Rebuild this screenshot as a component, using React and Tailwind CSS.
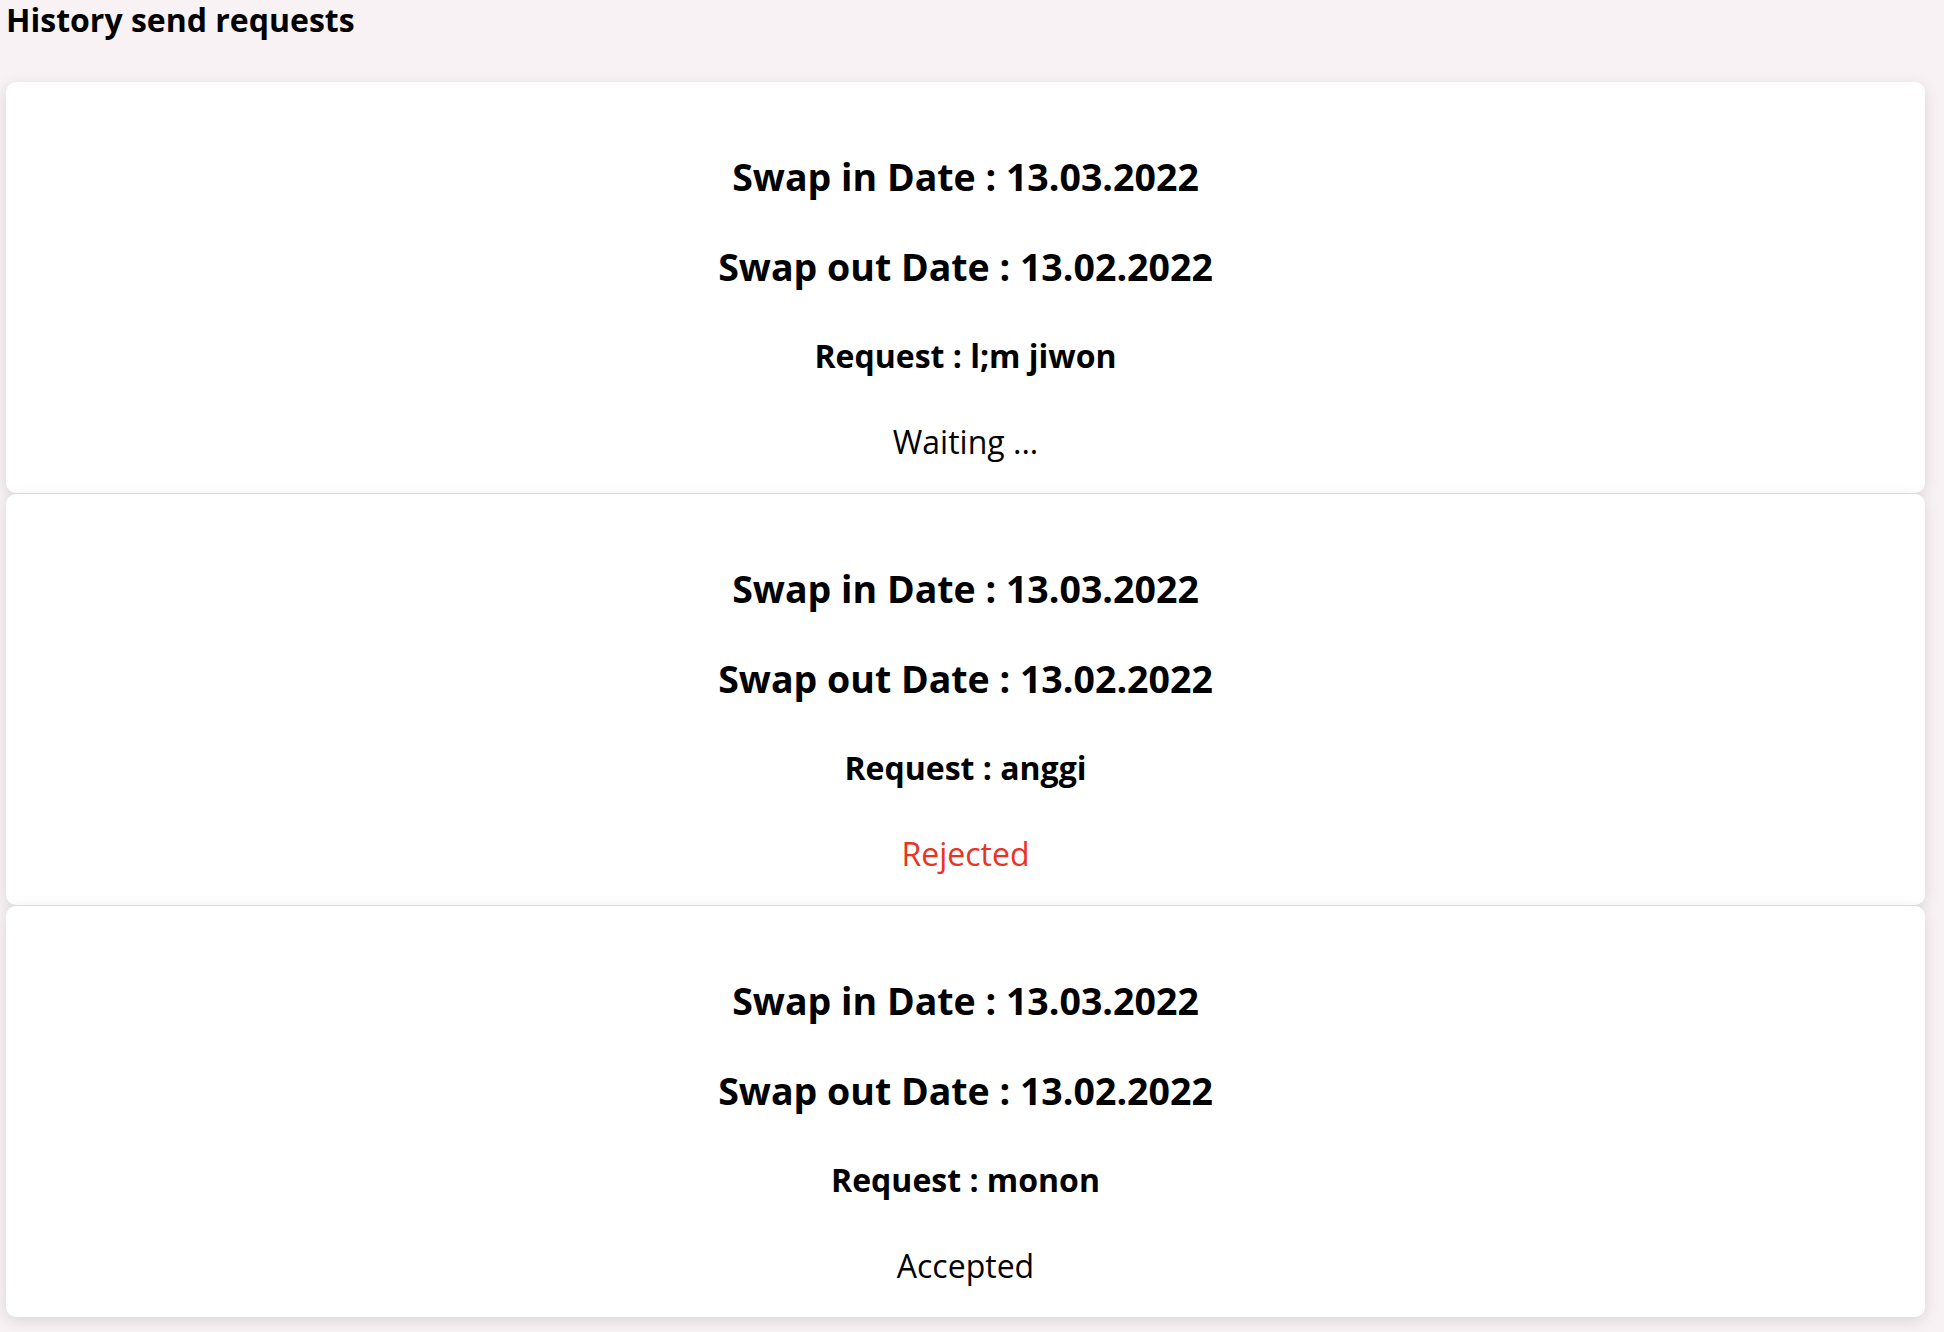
import React from 'react';

const requests = [
  { id: 1, swapIn: '13.03.2022', swapOut: '13.02.2022', name: 'l;m jiwon', status: 'waiting' },
  { id: 2, swapIn: '13.03.2022', swapOut: '13.02.2022', name: 'anggi', status: 'rejected' },
  { id: 3, swapIn: '13.03.2022', swapOut: '13.02.2022', name: 'monon', status: 'accepted' },
];

const statusLabel = (status) => {
  if (status === 'rejected') return 'Rejected';
  if (status === 'accepted') return 'Accepted';
  return 'Waiting ...';
};

const RequestCard = ({ item }) => (
  <div className="flex flex-col items-center bg-white rounded-[10px] shadow-[0_4px_16px_rgba(0,0,0,0.12)] pt-[50px] pb-[13px] text-black">
    <h1 className="h-[90px] leading-[90px] text-[37.5px] font-bold">Swap in Date : {item.swapIn}</h1>
    <h1 className="h-[90px] leading-[90px] text-[37.5px] font-bold">Swap out Date : {item.swapOut}</h1>
    <h3 className="h-[90px] leading-[88px] text-[32px] font-bold">Request : {item.name}</h3>
    <p
      className={`h-[78px] leading-[80px] text-[32px] ${item.status === 'rejected' ? 'text-[#eb3323]' : 'text-black'}`}
    >
      {statusLabel(item.status)}
    </p>
  </div>
);

const App = () => {
  return (
    <div className="min-h-screen bg-[#f8f2f4] font-['Open_Sans',sans-serif] pb-[15px]">
      <h2 className="pl-[6px] text-[32px] leading-[40px] font-bold text-black">History send requests</h2>
      <div className="flex flex-col gap-px mt-[42px] ml-[6px] mr-[19px]">
        {requests.map((item) => (
          <RequestCard key={item.id} item={item} />
        ))}
      </div>
    </div>
  );
};

export default App;
